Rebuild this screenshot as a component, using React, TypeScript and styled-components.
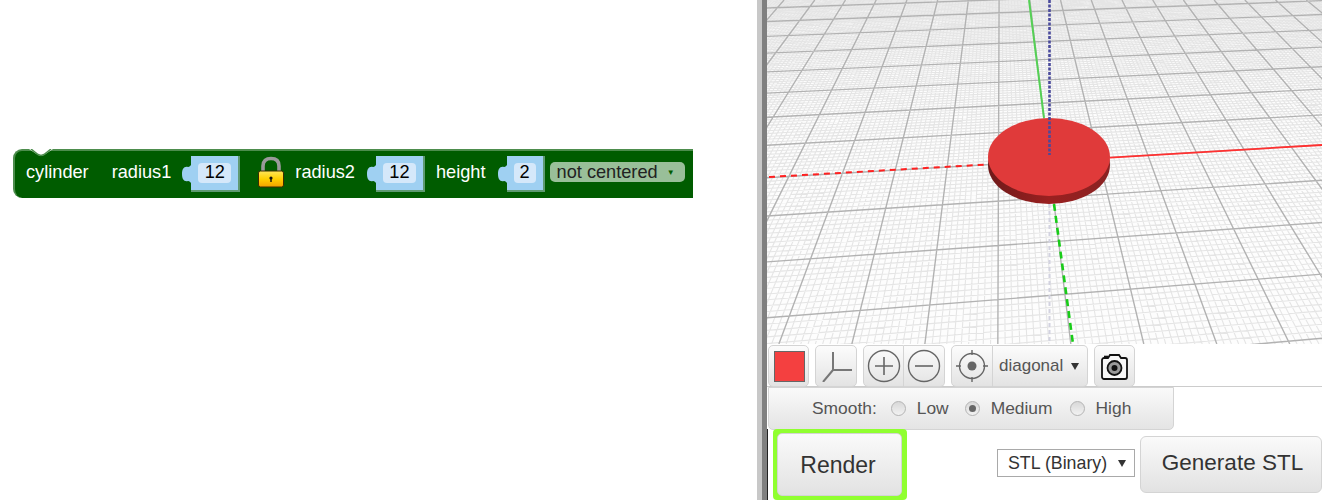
import React from 'react';
import styled, { createGlobalStyle } from 'styled-components';

const GlobalStyle = createGlobalStyle`
  html, body {
    margin: 0;
    padding: 0;
    height: 500px;
    overflow: hidden;
    background: #fff;
    font-family: "Liberation Sans", Arial, sans-serif;
  }
`;

const Page = styled.div`
  display: flex;
  width: 1322px;
  height: 500px;
  overflow: hidden;
`;

const Workspace = styled.div`
  position: relative;
  width: 757px;
  height: 500px;
  background: #fff;
`;

const Block = styled.div`
  position: absolute;
  left: 13px;
  top: 149px;
  box-sizing: border-box;
  display: flex;
  align-items: center;
  width: 680px;
  height: 49px;
  padding: 0 0 5px 11px;
  background: #005c00;
  border-top: 2px solid #4d8d4d;
  border-left: 2px solid #4d8d4d;
  border-radius: 9px 0 0 9px;
`;

const Notch = styled.svg`
  position: absolute;
  left: 14px;
  top: -2px;
`;

const BlockLabel = styled.span<{ $left?: number }>`
  margin-left: ${p => p.$left ?? 0}px;
  color: #fff;
  font-size: 18.2px;
  line-height: 20px;
  white-space: nowrap;
`;

const ValueSlot = styled.div<{ $width: number; $left: number }>`
  position: relative;
  box-sizing: border-box;
  flex: none;
  display: flex;
  align-items: center;
  justify-content: center;
  width: ${p => p.$width}px;
  height: 36px;
  margin-left: ${p => p.$left}px;
  margin-top: 3px;
  background: #9fd0f2;
  border-right: 2px solid #5f9a72;
  border-bottom: 2px solid #5f9a72;
`;

const SlotTab = styled.svg`
  position: absolute;
  left: -9px;
  top: 9px;
`;

const ValueField = styled.div<{ $width: number }>`
  display: flex;
  align-items: center;
  justify-content: center;
  width: ${p => p.$width}px;
  height: 20px;
  background: #d5e8fa;
  border-radius: 4px;
  color: #000;
  font-size: 18.2px;
`;

const LockIcon = styled.svg`
  flex: none;
  margin-left: 17px;
`;

const BlockDropdown = styled.div`
  display: flex;
  align-items: center;
  flex: none;
  box-sizing: border-box;
  width: 135px;
  height: 20px;
  margin-left: 5px;
  padding-left: 7px;
  background: #99bf99;
  border-radius: 5px;
  color: #222;
  font-size: 18.2px;
  white-space: nowrap;
`;

const DropdownArrow = styled.span`
  margin-left: 9px;
  color: #005c00;
  font-size: 8px;
`;

const Splitter = styled.div`
  flex: none;
  box-sizing: border-box;
  width: 10px;
  height: 500px;
  background: #c8c8c8;
  border-right: 5px solid #808080;
`;

const RightPane = styled.div`
  position: relative;
  display: flex;
  flex-direction: column;
  width: 555px;
  height: 500px;
  background: #fff;
`;

const ViewerFrame = styled.div`
  flex: none;
  width: 555px;
  height: 344px;
  overflow: hidden;
`;

const Viewer = styled.svg`
  display: block;
  background: #fdfdfd;
  filter: blur(0.45px);
`;

const Toolbar = styled.div`
  display: flex;
  align-items: flex-start;
  box-sizing: border-box;
  height: 43px;
  padding: 1px 0 0 1px;
  border-bottom: 1px solid #ccc;
`;

const ToolGroup = styled.div<{ $left: number }>`
  display: flex;
  margin-left: ${p => p.$left}px;
`;

const ToolButton = styled.div<{ $width: number; $joined?: 'left' | 'right' }>`
  box-sizing: border-box;
  display: flex;
  align-items: center;
  justify-content: center;
  width: ${p => p.$width}px;
  height: 42px;
  background: linear-gradient(#fcfcfc, #e3e3e3);
  border: 1px solid #d4d4d4;
  border-radius: ${p =>
    p.$joined === 'left' ? '5px 0 0 5px' : p.$joined === 'right' ? '0 5px 5px 0' : '5px'};
  ${p => (p.$joined === 'right' ? 'border-left: 0;' : '')}
`;

const Swatch = styled.div`
  box-sizing: border-box;
  width: 31px;
  height: 31px;
  margin-left: 1px;
  background: #f44040;
  border: 1px solid #666;
`;

const SelectWrap = styled.div<{ $right: number }>`
  position: relative;
  display: flex;
  &::after {
    content: '';
    position: absolute;
    right: ${p => p.$right}px;
    top: 50%;
    margin-top: -3px;
    border-left: 4px solid transparent;
    border-right: 4px solid transparent;
    border-top: 7px solid #333;
    pointer-events: none;
  }
`;

const ViewSelect = styled.select`
  appearance: none;
  width: 92px;
  height: 40px;
  padding: 0 0 2px 5px;
  border: 0;
  outline: 0;
  background: transparent;
  color: #555;
  font-family: "Liberation Sans", Arial, sans-serif;
  font-size: 17px;
`;

const SmoothRow = styled.div`
  display: flex;
  align-items: center;
  box-sizing: border-box;
  width: 406px;
  height: 43px;
  margin-left: 1px;
  padding-left: 43px;
  background: linear-gradient(#fafafa, #e4e4e4);
  border: 1px solid #d4d4d4;
  border-radius: 0 0 5px 5px;
  color: #555;
  font-size: 17.4px;
`;

const RadioOption = styled.span<{ $left: number }>`
  display: flex;
  align-items: center;
  margin-left: ${p => p.$left}px;
`;

const RadioDot = styled.span<{ $checked?: boolean }>`
  box-sizing: border-box;
  display: flex;
  align-items: center;
  justify-content: center;
  width: 15px;
  height: 15px;
  margin-right: 11px;
  background: linear-gradient(#d8d8d8, #f2f2f2);
  border: 1px solid #b4b4b4;
  border-radius: 50%;
  &::after {
    content: '';
    display: ${p => (p.$checked ? 'block' : 'none')};
    width: 7px;
    height: 7px;
    border-radius: 50%;
    background: #666;
  }
`;

const ActionRow = styled.div`
  position: relative;
  flex: 1;
  display: flex;
  align-items: flex-start;
  border-left: 1px solid #222;
  margin-top: -1px;
`;

const RenderHighlight = styled.div`
  box-sizing: border-box;
  width: 134px;
  height: 71px;
  margin-left: 5px;
  background: #90ff30;
  padding: 4px 5px 4px 4px;
  border-radius: 4px;
`;

const RenderButton = styled.div`
  box-sizing: border-box;
  display: flex;
  align-items: center;
  justify-content: center;
  height: 63px;
  padding: 1px 3px 0 0;
  background: linear-gradient(#fafafa, #e2e2e2);
  border: 1px solid #d4d4d4;
  border-radius: 5px;
  color: #333;
  font-size: 23px;
`;

const FormatWrap = styled(SelectWrap)`
  margin: 20px 0 0 90px;
`;

const FormatSelect = styled.select`
  appearance: none;
  box-sizing: border-box;
  width: 138px;
  height: 28px;
  padding: 0 0 0 10px;
  background: #fff;
  border: 1px solid #a9a9a9;
  border-radius: 0;
  color: #333;
  font-family: "Liberation Sans", Arial, sans-serif;
  font-size: 17.8px;
`;

const GenerateButton = styled.div`
  box-sizing: border-box;
  display: flex;
  align-items: center;
  justify-content: center;
  width: 182px;
  height: 57px;
  margin: 7px 0 0 5px;
  padding: 0 0 3px 3px;
  background: linear-gradient(#fafafa, #e2e2e2);
  border: 1px solid #d4d4d4;
  border-radius: 6px;
  color: #333;
  font-size: 22.5px;
`;

// viewer scene, coordinates are page pixels minus the pane origin
const ORIGIN_X = 1049 - 767;
const ORIGIN_Y = 161;
const HORIZON = -250;
const VP_COLUMNS_X = 1000 - 767;
const VP_ROWS_X = 8000 - 767;

const rowLine = (yAtOrigin: number) => {
  const slope = (HORIZON - yAtOrigin) / (VP_ROWS_X - ORIGIN_X);
  const y0 = yAtOrigin + slope * (0 - ORIGIN_X);
  const y1 = yAtOrigin + slope * (555 - ORIGIN_X);
  return `M0 ${y0.toFixed(2)}L555 ${y1.toFixed(2)}`;
};

const columnLine = (xAtOrigin: number) => {
  const k = (xAtOrigin - VP_COLUMNS_X) / (ORIGIN_Y - HORIZON);
  const xTop = VP_COLUMNS_X + k * (0 - HORIZON);
  const xBottom = VP_COLUMNS_X + k * (344 - HORIZON);
  return `M${xTop.toFixed(2)} 0L${xBottom.toFixed(2)} 344`;
};

const buildGrid = () => {
  let minor = '';
  let major = '';
  for (let m = -115; m <= 42; m++) {
    const inv = 0.002433 - m * 0.00002;
    const y = HORIZON + 1 / inv;
    if (m % 10 === 0) major += rowLine(y);
    else minor += rowLine(y);
  }
  for (let k = -90; k <= 100; k++) {
    const x = ORIGIN_X + k * 5.05;
    if (k % 10 === 0) major += columnLine(x);
    else minor += columnLine(x);
  }
  return { minor, major };
};

const grid = buildGrid();

const Scene: React.FC = () => (
  <ViewerFrame>
    <Viewer width={555} height={344} viewBox="0 0 555 344">
      <defs>
        <linearGradient id="rim" x1="0" x2="1" y1="0" y2="0">
          <stop offset="0" stopColor="#6f1a1a" />
          <stop offset="0.5" stopColor="#9a2020" />
          <stop offset="1" stopColor="#8a2222" />
        </linearGradient>
      </defs>
      <path d={grid.minor} stroke="#e5e5e5" strokeWidth={1.1} fill="none" />
      <path d={grid.major} stroke="#b2b2b2" strokeWidth={1.4} fill="none" />
      <path d="M2 177L222 164.4" stroke="#ff2020" strokeWidth={2} strokeDasharray="6 5" fill="none" />
      <path d="M343 157.6L555 145" stroke="#ff3030" strokeWidth={1.8} fill="none" />
      <path d="M262 0L277 118" stroke="#55d055" strokeWidth={2} fill="none" />
      <path d="M287 204L306 344" stroke="#18cc18" strokeWidth={2.6} strokeDasharray="7 5" fill="none" />
      <path d="M282.5 204V344" stroke="#d2d2e0" strokeWidth={2} strokeDasharray="4 3" fill="none" />
      <ellipse cx={282} cy={165} rx={61} ry={39} fill="url(#rim)" />
      <ellipse cx={282} cy={157} rx={61} ry={39} fill="#e03a3a" />
      <path d="M282.5 0V155" stroke="#4a4a9c" strokeWidth={2.6} strokeDasharray="3 1.5" fill="none" />
    </Viewer>
  </ViewerFrame>
);

const Tab: React.FC = () => (
  <SlotTab width={10} height={18} viewBox="0 0 10 18">
    <path d="M10 0C8 0 8 2 6 2 2 1 0 4 0 9 0 14 2 17 6 16 8 16 8 18 10 18Z" fill="#9fd0f2" />
  </SlotTab>
);

const App: React.FC = () => (
  <>
    <GlobalStyle />
    <Page>
      <Workspace>
        <Block>
          <Notch width={24} height={8} viewBox="0 0 24 8">
            <path d="M0 0H24L15 6 12 7 9 6Z" fill="#fff" />
            <path d="M2 0L9 5.5 12 6.5 15 5.5 22 0" stroke="#4d8d4d" strokeWidth={1.5} fill="none" />
          </Notch>
          <BlockLabel>cylinder</BlockLabel>
          <BlockLabel $left={23}>radius1</BlockLabel>
          <ValueSlot $width={49} $left={20}>
            <Tab />
            <ValueField $width={33}>12</ValueField>
          </ValueSlot>
          <LockIcon width={28} height={32} viewBox="0 0 28 32">
            <defs>
              <linearGradient id="gold" x1="0" x2="0" y1="0" y2="1">
                <stop offset="0" stopColor="#ffe75a" />
                <stop offset="0.5" stopColor="#ffd000" />
                <stop offset="1" stopColor="#f2a000" />
              </linearGradient>
            </defs>
            <path d="M6 16V10C6 5 9 2.5 14 2.5s8 2.5 8 7.5v6" stroke="#9a9a9a" strokeWidth={3.6} fill="none" />
            <rect x={1.5} y={15} width={25} height={16} rx={2} fill="url(#gold)" stroke="#3c2c00" />
            <circle cx={14} cy={22} r={1.6} fill="#111" />
            <rect x={13.3} y={22} width={1.4} height={4} fill="#111" />
          </LockIcon>
          <BlockLabel $left={10}>radius2</BlockLabel>
          <ValueSlot $width={49} $left={21}>
            <Tab />
            <ValueField $width={33}>12</ValueField>
          </ValueSlot>
          <BlockLabel $left={11}>height</BlockLabel>
          <ValueSlot $width={38} $left={21}>
            <Tab />
            <ValueField $width={22}>2</ValueField>
          </ValueSlot>
          <BlockDropdown>
            not centered
            <DropdownArrow>▼</DropdownArrow>
          </BlockDropdown>
        </Block>
      </Workspace>
      <Splitter />
      <RightPane>
        <Scene />
        <Toolbar>
          <ToolButton $width={41}>
            <Swatch />
          </ToolButton>
          <ToolGroup $left={6}>
            <ToolButton $width={42}>
              <svg width={32} height={32} viewBox="0 0 32 32">
                <path d="M13 2V20H34M13 20L3 32" stroke="#777" strokeWidth={2} fill="none" />
              </svg>
            </ToolButton>
          </ToolGroup>
          <ToolGroup $left={6}>
            <ToolButton $width={41} $joined="left">
              <svg width={34} height={34} viewBox="0 0 34 34">
                <circle cx={17} cy={17} r={15.5} stroke="#666" strokeWidth={1.4} fill="none" />
                <path d="M17 8V26M8 17H26" stroke="#666" strokeWidth={1.6} />
              </svg>
            </ToolButton>
            <ToolButton $width={41} $joined="right">
              <svg width={34} height={34} viewBox="0 0 34 34">
                <circle cx={17} cy={17} r={15.5} stroke="#666" strokeWidth={1.4} fill="none" />
                <path d="M8 17H26" stroke="#666" strokeWidth={1.6} />
              </svg>
            </ToolButton>
          </ToolGroup>
          <ToolGroup $left={6}>
            <ToolButton $width={42} $joined="left">
              <svg width={34} height={34} viewBox="0 0 34 34">
                <circle cx={17} cy={17} r={12.5} stroke="#666" strokeWidth={1.4} fill="none" />
                <circle cx={17} cy={17} r={4.5} fill="#666" />
                <path d="M17 1V6M17 28V33M1 17H6M28 17H33" stroke="#666" strokeWidth={1.4} />
              </svg>
            </ToolButton>
            <ToolButton $width={95} $joined="right">
              <SelectWrap $right={7}>
                <ViewSelect defaultValue="diagonal">
                  <option>diagonal</option>
                </ViewSelect>
              </SelectWrap>
            </ToolButton>
          </ToolGroup>
          <ToolGroup $left={6}>
            <ToolButton $width={41}>
              <svg width={27} height={27} viewBox="0 0 27 27">
                <path
                  d="M3 5H7L9 2H18L20 5H24C25 5 26 6 26 7V24C26 25 25 26 24 26H3C2 26 1 25 1 24V7C1 6 2 5 3 5Z"
                  stroke="#111"
                  strokeWidth={1.8}
                  fill="#f7f7f7"
                />
                <path d="M3 3.5H7" stroke="#111" strokeWidth={1.6} />
                <circle cx={13.5} cy={15} r={7} fill="#9a9a9a" stroke="#111" strokeWidth={1.8} />
                <circle cx={13.5} cy={15} r={3} fill="#111" />
              </svg>
            </ToolButton>
          </ToolGroup>
        </Toolbar>
        <SmoothRow>
          Smooth:
          <RadioOption $left={14}>
            <RadioDot />
            Low
          </RadioOption>
          <RadioOption $left={16}>
            <RadioDot $checked />
            Medium
          </RadioOption>
          <RadioOption $left={17}>
            <RadioDot />
            High
          </RadioOption>
        </SmoothRow>
        <ActionRow>
          <RenderHighlight>
            <RenderButton>Render</RenderButton>
          </RenderHighlight>
          <FormatWrap $right={9}>
            <FormatSelect defaultValue="stl">
              <option value="stl">STL (Binary)</option>
            </FormatSelect>
          </FormatWrap>
          <GenerateButton>Generate STL</GenerateButton>
        </ActionRow>
      </RightPane>
    </Page>
  </>
);

export default App;
